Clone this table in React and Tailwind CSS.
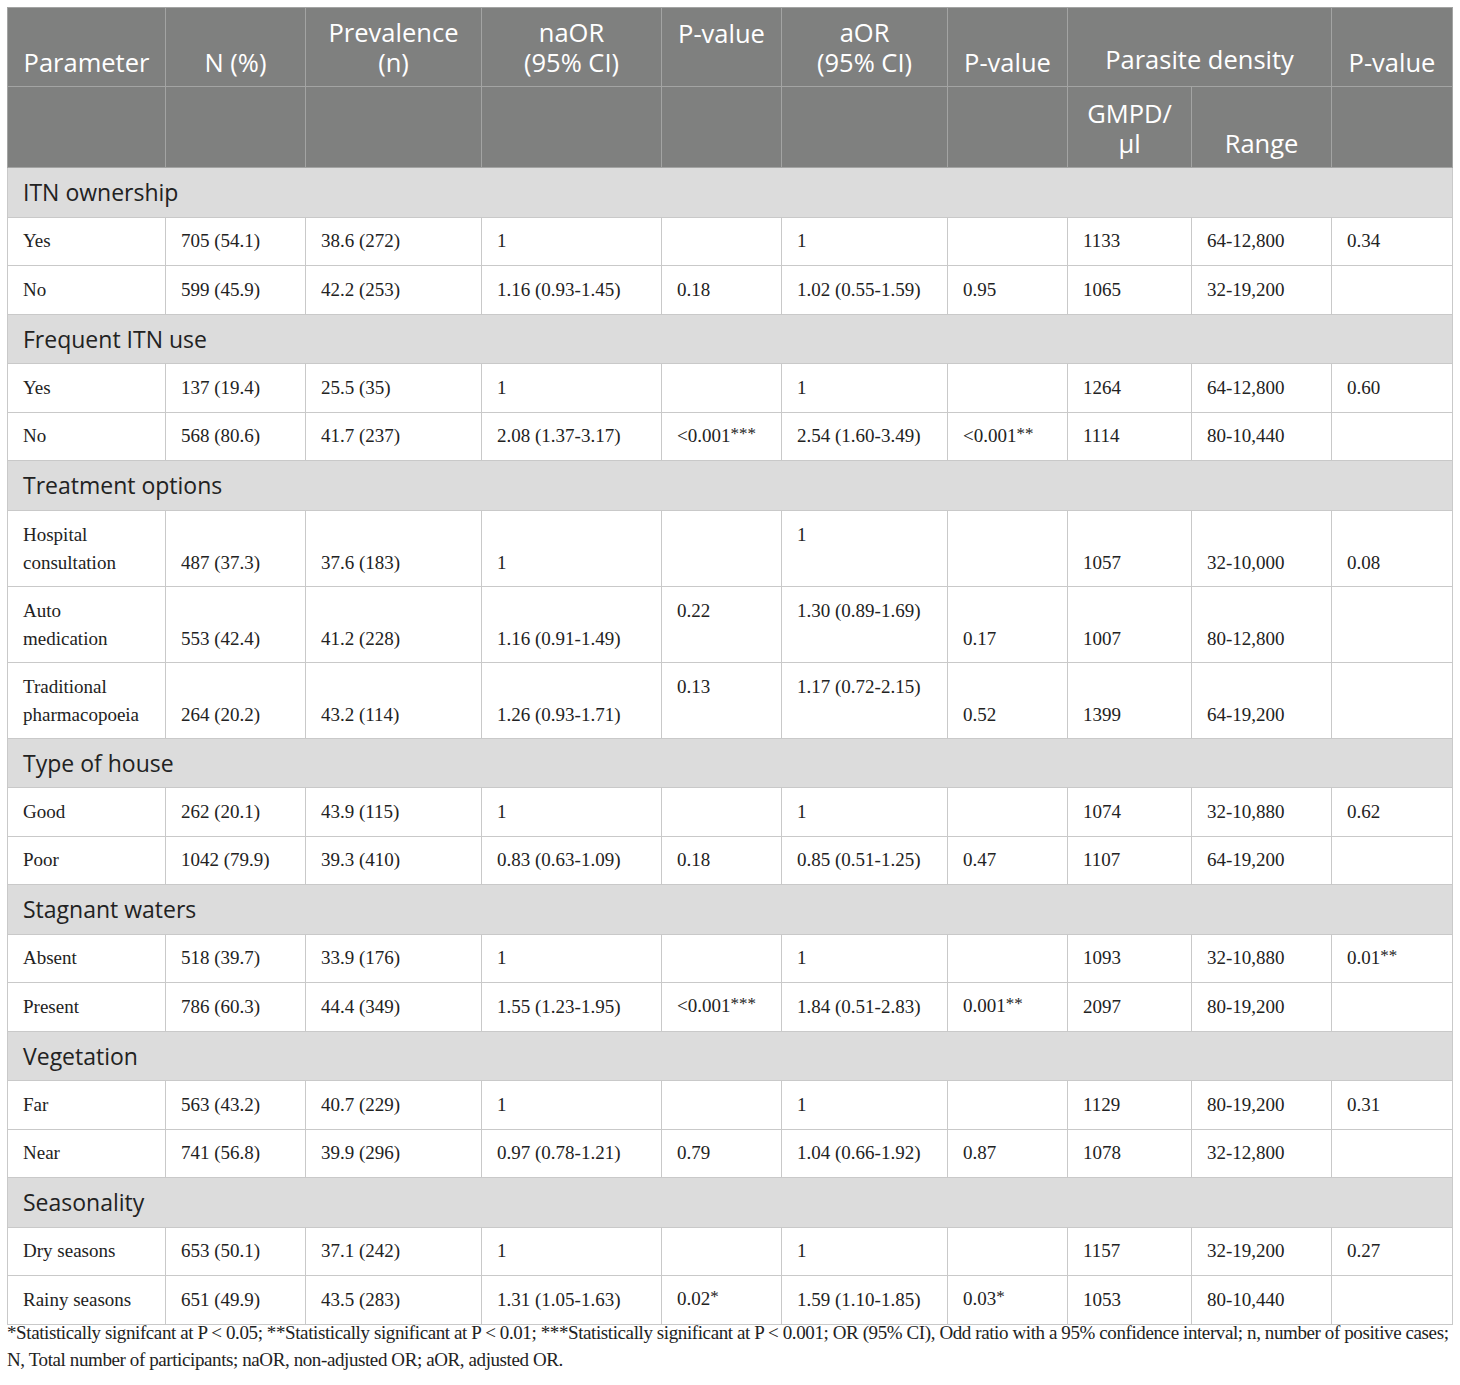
import React from "react";

const sections = [
  {
    title: "ITN ownership",
    rows: [
      ["Yes", "705 (54.1)", "38.6 (272)", "1", "", "1", "", "1133", "64-12,800", "0.34"],
      ["No", "599 (45.9)", "42.2 (253)", "1.16 (0.93-1.45)", "0.18", "1.02 (0.55-1.59)", "0.95", "1065", "32-19,200", ""],
    ],
  },
  {
    title: "Frequent ITN use",
    rows: [
      ["Yes", "137 (19.4)", "25.5 (35)", "1", "", "1", "", "1264", "64-12,800", "0.60"],
      ["No", "568 (80.6)", "41.7 (237)", "2.08 (1.37-3.17)", "<0.001***", "2.54 (1.60-3.49)", "<0.001**", "1114", "80-10,440", ""],
    ],
  },
  {
    title: "Treatment options",
    tall: true,
    rows: [
      { cells: ["Hospital consultation", "487 (37.3)", "37.6 (183)", "1", "", "1", "", "1057", "32-10,000", "0.08"], top: [5] },
      { cells: ["Auto medication", "553 (42.4)", "41.2 (228)", "1.16 (0.91-1.49)", "0.22", "1.30 (0.89-1.69)", "0.17", "1007", "80-12,800", ""], top: [4, 5] },
      { cells: ["Traditional pharmacopoeia", "264 (20.2)", "43.2 (114)", "1.26 (0.93-1.71)", "0.13", "1.17 (0.72-2.15)", "0.52", "1399", "64-19,200", ""], top: [4, 5] },
    ],
  },
  {
    title: "Type of house",
    rows: [
      ["Good", "262 (20.1)", "43.9 (115)", "1", "", "1", "", "1074", "32-10,880", "0.62"],
      ["Poor", "1042 (79.9)", "39.3 (410)", "0.83 (0.63-1.09)", "0.18", "0.85 (0.51-1.25)", "0.47", "1107", "64-19,200", ""],
    ],
  },
  {
    title: "Stagnant waters",
    rows: [
      ["Absent", "518 (39.7)", "33.9 (176)", "1", "", "1", "", "1093", "32-10,880", "0.01**"],
      ["Present", "786 (60.3)", "44.4 (349)", "1.55 (1.23-1.95)", "<0.001***", "1.84 (0.51-2.83)", "0.001**", "2097", "80-19,200", ""],
    ],
  },
  {
    title: "Vegetation",
    rows: [
      ["Far", "563 (43.2)", "40.7 (229)", "1", "", "1", "", "1129", "80-19,200", "0.31"],
      ["Near", "741 (56.8)", "39.9 (296)", "0.97 (0.78-1.21)", "0.79", "1.04 (0.66-1.92)", "0.87", "1078", "32-12,800", ""],
    ],
  },
  {
    title: "Seasonality",
    rows: [
      ["Dry seasons", "653 (50.1)", "37.1 (242)", "1", "", "1", "", "1157", "32-19,200", "0.27"],
      ["Rainy seasons", "651 (49.9)", "43.5 (283)", "1.31 (1.05-1.63)", "0.02*", "1.59 (1.10-1.85)", "0.03*", "1053", "80-10,440", ""],
    ],
  },
];

const widths = [158, 140, 176, 180, 120, 166, 120, 124, 140, 121];

// asterisks sit a bit higher and smaller than the digits
const Val = ({ text }) => {
  const m = text.match(/^([^*]*)(\*+)$/);
  if (!m) return text;
  return (
    <>
      {m[1]}
      <span className="relative -top-[3px] text-[17px]">{m[2]}</span>
    </>
  );
};

const th = "border border-[#a3a4a3] px-2 pb-[9px] font-normal text-white text-center leading-[30px]";
const td = "border border-[#c9c9c9] px-[15px] text-[#222]";

export default function App() {
  return (
    <div className="bg-white w-[1460px] min-h-[1385px] pt-[7px] pl-[7px]">
      <table
        className="table-fixed border-collapse w-[1446px]"
        style={{ fontFamily: '"Liberation Serif", "Times New Roman", serif' }}
      >
        <colgroup>
          {widths.map((w, i) => (
            <col key={i} style={{ width: w }} />
          ))}
        </colgroup>
        <thead
          className="bg-[#7f807f] text-[25.5px]"
          style={{ fontFamily: '"Open Sans", sans-serif' }}
        >
          <tr className="h-[79px]">
            <th className={`${th} align-bottom`}>Parameter</th>
            <th className={`${th} align-bottom`}>N (%)</th>
            <th className={`${th} align-bottom`}>
              Prevalence
              <br />
              (n)
            </th>
            <th className={`${th} align-bottom`}>
              naOR
              <br />
              (95% CI)
            </th>
            <th className={`${th} align-top pt-[10px]`}>P-value</th>
            <th className={`${th} align-bottom`}>
              aOR
              <br />
              (95% CI)
            </th>
            <th className={`${th} align-bottom`}>P-value</th>
            <th colSpan={2} className={`${th} align-bottom pb-[12px]`}>
              Parasite density
            </th>
            <th className={`${th} align-bottom`}>P-value</th>
          </tr>
          <tr className="h-[81px]">
            <th className={th}></th>
            <th className={th}></th>
            <th className={th}></th>
            <th className={th}></th>
            <th className={th}></th>
            <th className={th}></th>
            <th className={th}></th>
            <th className={`${th} align-bottom`}>
              GMPD/
              <br />
              μl
            </th>
            <th className={`${th} align-bottom`}>Range</th>
            <th className={th}></th>
          </tr>
        </thead>
        <tbody className="text-[19px]">
          {sections.map((s) => (
            <React.Fragment key={s.title}>
              <tr className="h-[49.5px] bg-[#dcdcdc]">
                <td
                  colSpan={10}
                  className="border border-[#c9c9c9] px-[15px] text-[23px] text-[#222] align-middle"
                  style={{ fontFamily: '"Open Sans", sans-serif' }}
                >
                  {s.title}
                </td>
              </tr>
              {s.rows.map((r, ri) => {
                const cells = Array.isArray(r) ? r : r.cells;
                const top = Array.isArray(r) ? [] : r.top;
                return (
                  <tr key={ri} className={s.tall ? "h-[76px]" : "h-[48.5px]"}>
                    {cells.map((c, ci) => (
                      <td
                        key={ci}
                        className={`${td} ${
                          s.tall
                            ? top.includes(ci)
                              ? "align-top pt-[10px] leading-[28px]"
                              : "align-bottom pb-[9px] leading-[28px]"
                            : "align-middle leading-[28px]"
                        }`}
                      >
                        {ci === 0 && s.tall ? (
                          <span className="block pr-2">{c}</span>
                        ) : (
                          <Val text={c} />
                        )}
                      </td>
                    ))}
                  </tr>
                );
              })}
            </React.Fragment>
          ))}
        </tbody>
      </table>
      <p
        className="-mt-[6px] text-[19px] leading-[27px] text-[#222] tracking-[-0.4px] whitespace-nowrap"
        style={{ fontFamily: '"Liberation Serif", "Times New Roman", serif' }}
      >
        *Statistically signifcant at P &lt; 0.05; **Statistically significant at P &lt; 0.01; ***Statistically significant at
        P &lt; 0.001; OR (95% CI), Odd ratio with a 95% confidence interval; n, number of positive cases;
        <br />
        N, Total number of participants; naOR, non-adjusted OR; aOR, adjusted OR.
      </p>
    </div>
  );
}
